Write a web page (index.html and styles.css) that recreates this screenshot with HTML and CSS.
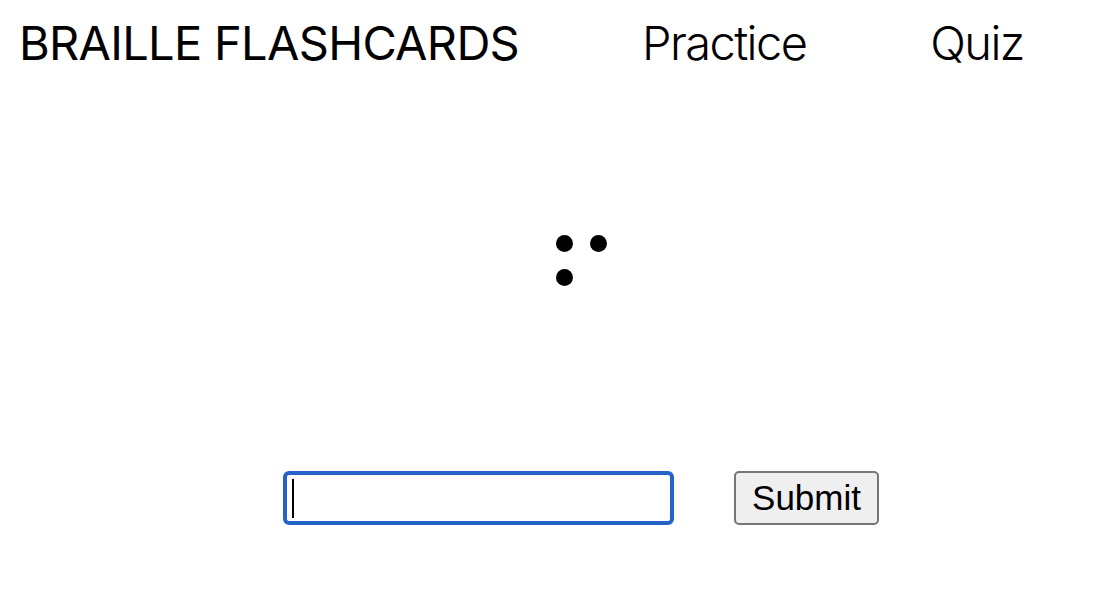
FILE: index.html
```html
<!DOCTYPE html>
<html lang="en">
<head>
<meta charset="utf-8">
<title>Braille Flashcards</title>
<link rel="stylesheet" href="styles.css">
</head>
<body>
<header class="header">
  <div class="brand">BRAILLE FLASHCARDS</div>
  <nav class="nav">
    <a class="nav-link" href="#">Practice</a>
    <a class="nav-link" href="#">Quiz</a>
  </nav>
</header>
<main class="main">
  <div class="cell" aria-label="braille letter">
    <span class="dot"></span><span class="dot"></span>
    <span class="dot"></span><span class="dot empty"></span>
    <span class="dot empty"></span><span class="dot empty"></span>
  </div>
  <form class="answer" onsubmit="return false">
    <span class="field">
      <input class="answer-input" type="text">
      <span class="caret"></span>
    </span>
    <button class="submit" type="submit">Submit</button>
  </form>
</main>
</body>
</html>
```
FILE: styles.css
```css
html, body {
  margin: 0;
  padding: 0;
  background: #ffffff;
}
body {
  font-family: Inter, "Noto Sans", sans-serif;
  color: #000;
  width: 1116px;
  height: 600px;
  overflow: hidden;
}
.header {
  display: flex;
  align-items: center;
  height: 84px;
  padding-left: 19px;
}
.brand {
  font-size: 47px;
  font-weight: 400;
  letter-spacing: -0.7px;
}
.nav {
  display: flex;
  gap: 124px;
  margin-left: 123px;
}
.nav-link {
  font-size: 47px;
  font-weight: 300;
  letter-spacing: -1.6px;
  color: #000;
  text-decoration: none;
}
.main {
  display: flex;
  flex-direction: column;
  align-items: center;
  padding-left: 46px;
}
.cell {
  display: grid;
  grid-template-columns: 17px 17px;
  grid-auto-rows: 17px;
  gap: 17px;
  margin-top: 151px;
  margin-left: 1px;
}
.dot {
  width: 17px;
  height: 17px;
  border-radius: 50%;
  background: #000;
}
.dot.empty {
  background: transparent;
}
.answer {
  display: flex;
  align-items: center;
  gap: 60px;
  margin-top: 151px;
}
.field {
  position: relative;
  display: block;
}
.answer-input {
  display: block;
  box-sizing: border-box;
  width: 391px;
  height: 54px;
  border: 4px solid #2563c9;
  border-radius: 6px;
  outline: none;
  padding: 0 6px;
  font-family: "Liberation Sans", Arial, sans-serif;
  font-size: 35px;
  background: #fff;
}
.caret {
  position: absolute;
  left: 9px;
  top: 8px;
  width: 2px;
  height: 39px;
  background: #000;
}
.submit {
  box-sizing: border-box;
  width: 145px;
  height: 54px;
  border: 2px solid #767676;
  border-radius: 5px;
  background: #efefef;
  font-family: "Liberation Sans", Arial, sans-serif;
  font-size: 35px;
  color: #000;
  padding: 0;
}
```
